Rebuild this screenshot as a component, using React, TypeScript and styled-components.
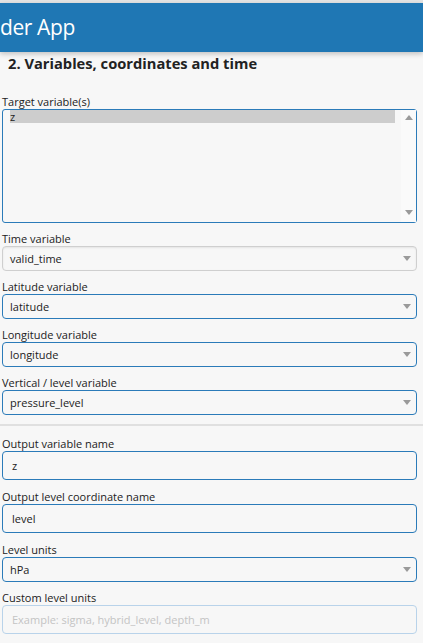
import React from "react";
import styled, { createGlobalStyle } from "styled-components";

const COLORS = {
  bg: "#f7f7f7",
  header: "#1f77b4",
  focus: "#2b7bb9",
  muted: "#cfcfcf",
  faint: "#b9d3ea",
  text: "#222",
  arrow: "#9a9a9a",
};

const GlobalStyle = createGlobalStyle`
  html, body {
    margin: 0;
    padding: 0;
    background: ${COLORS.bg};
    font-family: "Open Sans", "Noto Sans", sans-serif;
    color: ${COLORS.text};
  }
  * { box-sizing: border-box; }
`;

const Arrow = ({ up }: { up?: boolean }) => (
  <svg width="8" height="6" viewBox="0 0 8 6">
    <path d={up ? "M0 6 L4 1 L8 6 Z" : "M0 0 L8 0 L4 5 Z"} fill={COLORS.arrow} />
  </svg>
);

type SelectProps = { label: string; value: string; disabled?: boolean };

const SelectField: React.FC<SelectProps> = ({ label, value, disabled }) => (
  <Field>
    <Label>{label}</Label>
    <SelectBox $disabled={disabled}>
      <span>{value}</span>
      <Caret>
        <Arrow />
      </Caret>
    </SelectBox>
  </Field>
);

type InputProps = { label: string; value?: string; placeholder?: string };

const InputField: React.FC<InputProps> = ({ label, value, placeholder }) => (
  <Field $tall>
    <Label>{label}</Label>
    <TextInput
      defaultValue={value}
      placeholder={placeholder}
      $faint={!value}
    />
  </Field>
);

const App: React.FC = () => {
  return (
    <>
      <GlobalStyle />
      <Root>
        <TopStrip />
        <Header>der App</Header>
        <Content>
          <Title>2. Variables, coordinates and time</Title>

          <Field $first>
            <Label>Target variable(s)</Label>
            <ListBox>
              <Options>
                <Option $selected>z</Option>
              </Options>
              <ScrollTrack>
                <Arrow up />
                <Arrow />
              </ScrollTrack>
            </ListBox>
          </Field>

          <SelectField label="Time variable" value="valid_time" disabled />
          <SelectField label="Latitude variable" value="latitude" />
          <SelectField label="Longitude variable" value="longitude" />
          <SelectField label="Vertical / level variable" value="pressure_level" />
        </Content>

        <Divider />

        <Content>
          <InputField label="Output variable name" value="z" />
          <InputField label="Output level coordinate name" value="level" />
          <SelectField label="Level units" value="hPa" />
          <InputField
            label="Custom level units"
            placeholder="Example: sigma, hybrid_level, depth_m"
          />
        </Content>
      </Root>
    </>
  );
};

const Root = styled.div`
  width: 423px;
  height: 643px;
  overflow: hidden;
`;

const TopStrip = styled.div`
  height: 3px;
  background: #e4e4e4;
`;

const Header = styled.div`
  height: 49px;
  background: ${COLORS.header};
  color: #fff;
  font-size: 21px;
  letter-spacing: -0.4px;
  display: flex;
  align-items: center;
  padding-bottom: 2px;
  box-shadow: 0 2px 5px rgba(0, 0, 0, 0.22);
  position: relative;
`;

const Content = styled.div`
  padding: 0 6px 0 2px;
`;

const Title = styled.div`
  font-weight: 700;
  font-size: 14.7px;
  line-height: 20px;
  margin: 1px 0 0 6px;
`;

const Field = styled.div<{ $first?: boolean; $tall?: boolean }>`
  display: flex;
  flex-direction: column;
  margin-top: ${(p) => (p.$first ? "22px" : "0")};
  margin-bottom: ${(p) => (p.$tall ? "10px" : "9px")};
`;

const Label = styled.div`
  font-size: 11px;
  line-height: 13px;
  margin-bottom: 1px;
`;

const ListBox = styled.div`
  height: 114px;
  border: 1px solid ${COLORS.focus};
  border-radius: 3px;
  display: flex;
  font-size: 11px;
`;

const Options = styled.div`
  flex: 1;
  padding: 0 6px 0 7px;
`;

const Option = styled.div<{ $selected?: boolean }>`
  height: 13px;
  line-height: 13px;
  background: ${(p) => (p.$selected ? "#cdcdcd" : "transparent")};
`;

const ScrollTrack = styled.div`
  width: 15px;
  background: #fafafa;
  display: flex;
  flex-direction: column;
  justify-content: space-between;
  align-items: center;
  padding: 4px 0 6px;
`;

const SelectBox = styled.div<{ $disabled?: boolean }>`
  height: 25px;
  border: 1px solid ${(p) => (p.$disabled ? COLORS.muted : COLORS.focus)};
  border-radius: 4px;
  box-shadow: ${(p) =>
    p.$disabled ? "inset 0 1px 2px rgba(0,0,0,0.08)" : "none"};
  display: flex;
  align-items: center;
  justify-content: space-between;
  padding: 0 5px 0 7px;
  font-size: 11px;
`;

const Caret = styled.span`
  display: flex;
  align-items: center;
`;

const TextInput = styled.input<{ $faint?: boolean }>`
  height: 29px;
  border: 1px solid ${(p) => (p.$faint ? COLORS.faint : COLORS.focus)};
  border-radius: 4px;
  background: transparent;
  font-family: inherit;
  font-size: 11px;
  color: ${COLORS.text};
  padding: 0 9px;
  outline: none;

  &::placeholder {
    color: #c4c4c4;
  }
`;

const Divider = styled.div`
  height: 2px;
  background: #e0e0e0;
  margin: 2px 0 11px;
`;

export default App;
